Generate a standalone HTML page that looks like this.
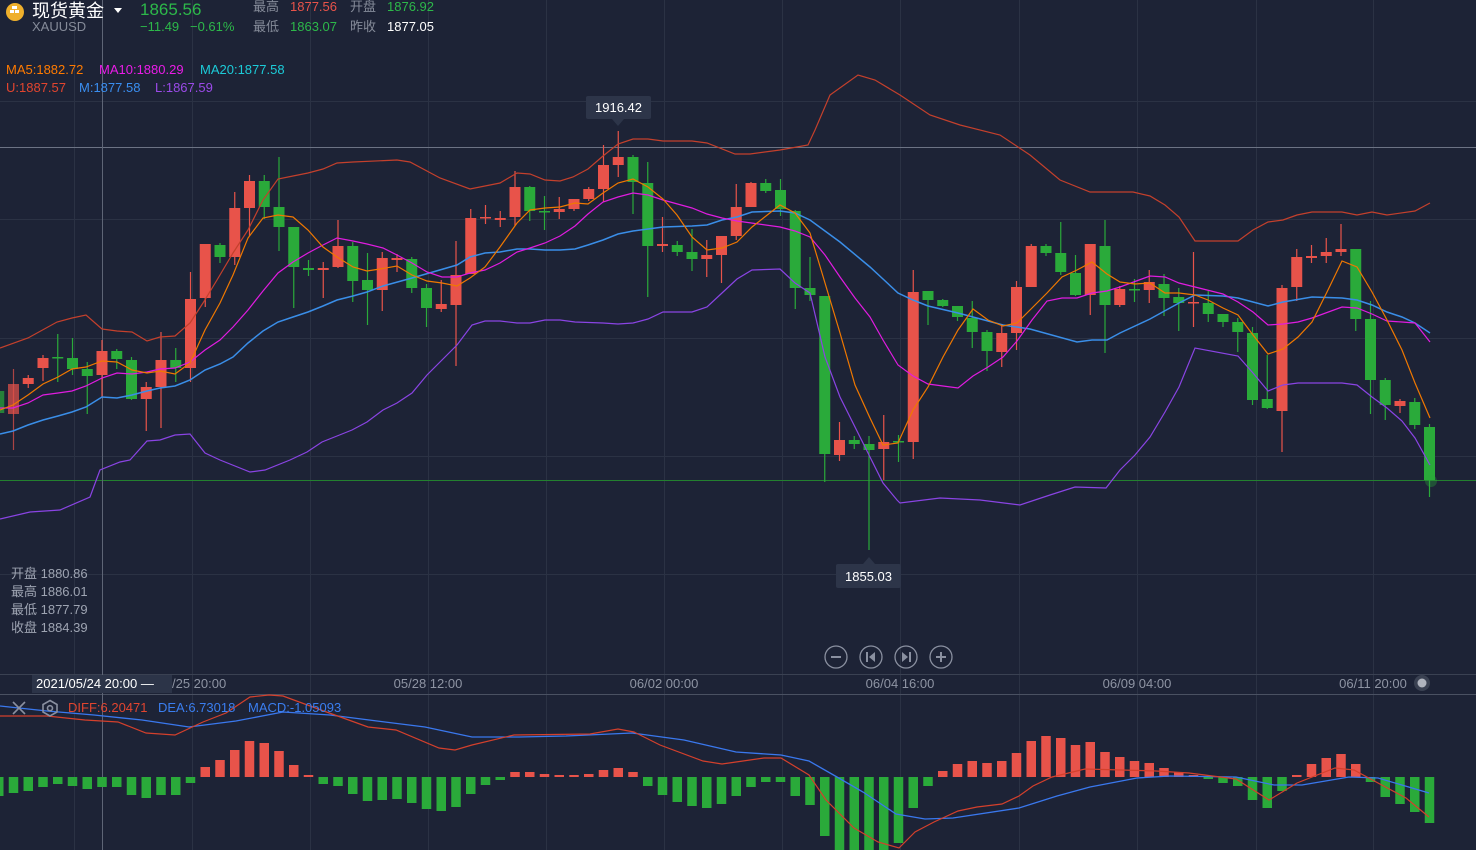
<!DOCTYPE html>
<html><head><meta charset="utf-8">
<style>
html,body{margin:0;padding:0;background:#1d2336;width:1476px;height:850px;overflow:hidden;font-family:"Liberation Sans","Noto Sans CJK SC",sans-serif}
.t{position:absolute;white-space:nowrap;font-size:13px;line-height:16px}
svg{position:absolute;left:0;top:0}
</style></head><body>
<svg id="s" width="1476" height="850" xmlns="http://www.w3.org/2000/svg">
<g stroke="#2b3244" stroke-width="1">
<line x1="0" y1="101.5" x2="1476" y2="101.5"/>
<line x1="0" y1="219.5" x2="1476" y2="219.5"/>
<line x1="0" y1="338.5" x2="1476" y2="338.5"/>
<line x1="0" y1="456.5" x2="1476" y2="456.5"/>
<line x1="0" y1="574.5" x2="1476" y2="574.5"/>
</g>
<g id="vg" stroke="#2b3244" stroke-width="1"></g>
<line x1="0" y1="147.5" x2="1476" y2="147.5" stroke="#6c7384"/>
<line x1="0" y1="480.5" x2="1476" y2="480.5" stroke="#23802f"/>
<line x1="0" y1="674.5" x2="1476" y2="674.5" stroke="#3a4152"/>
<line x1="0" y1="694.5" x2="1476" y2="694.5" stroke="#4a5162"/>
<line x1="102.5" y1="0" x2="102.5" y2="850" stroke="#5e6576"/>
<g id="cd"></g>
<g id="ln" fill="none" stroke-width="1.2"></g>
<!-- tags -->
<rect x="586" y="96" width="65" height="23" rx="2" fill="#2d3549"/>
<polygon points="612,119 624,119 618,126" fill="#2d3549"/>
<text x="618.5" y="112" fill="#fff" font-size="13" text-anchor="middle" font-family="Liberation Sans">1916.42</text>
<rect x="836" y="564" width="65" height="24" rx="2" fill="#2d3549"/>
<polygon points="863,564 875,564 869,557" fill="#2d3549"/>
<text x="868.5" y="581" fill="#fff" font-size="13" text-anchor="middle" font-family="Liberation Sans">1855.03</text>
<!-- buttons -->
<g fill="none" stroke="#8a90a0" stroke-width="1.3">
<circle cx="836" cy="657" r="11"/><circle cx="871" cy="657" r="11"/><circle cx="906" cy="657" r="11"/><circle cx="941" cy="657" r="11"/>
<line x1="831" y1="657" x2="841" y2="657" stroke-width="2"/>
<line x1="936" y1="657" x2="946" y2="657" stroke-width="2"/><line x1="941" y1="652" x2="941" y2="662" stroke-width="2"/>
<line x1="867" y1="652" x2="867" y2="662" stroke-width="2"/>
<line x1="910" y1="652" x2="910" y2="662" stroke-width="2"/>
</g>
<polygon points="875,652 875,662 869,657" fill="#8a90a0"/>
<polygon points="902,652 902,662 908,657" fill="#8a90a0"/>
<!-- time axis -->
<rect x="32" y="675" width="140" height="18" fill="#2c3448"/>
<g font-size="13" fill="#8e94a3" font-family="Liberation Sans">
<text x="36" y="688" fill="#fff">2021/05/24 20:00 —</text>
<text x="172" y="688">/25 20:00</text>
<text x="428" y="688" text-anchor="middle">05/28 12:00</text>
<text x="664" y="688" text-anchor="middle">06/02 00:00</text>
<text x="900" y="688" text-anchor="middle">06/04 16:00</text>
<text x="1137" y="688" text-anchor="middle">06/09 04:00</text>
<text x="1373" y="688" text-anchor="middle">06/11 20:00</text>
</g>
<circle cx="1422" cy="683" r="8" fill="#3a4152"/>
<circle cx="1422" cy="683" r="4.5" fill="#b0b4be"/>
<!-- macd icons -->
<g stroke="#8a90a0" stroke-width="1.6" fill="none">
<line x1="13" y1="702" x2="25" y2="714"/><line x1="25" y1="702" x2="13" y2="714"/>
<polygon points="50,700.5 57,704.5 57,712 50,716 43,712 43,704.5"/>
<circle cx="50" cy="708.2" r="2.5"/>
</g>
<circle cx="1431" cy="481" r="6" fill="#2aaa3a" opacity="0.35"/>
</svg>

<div class="t" style="left:6px;top:3px;width:18px;height:18px;border-radius:50%;background:#efb02c"></div>
<div class="t" style="left:10px;top:10px;width:4px;height:3px;background:#fff"></div>
<div class="t" style="left:15px;top:10px;width:4px;height:3px;background:#fff"></div>
<div class="t" style="left:12px;top:6px;width:5px;height:3px;background:#fff"></div>
<div class="t" style="left:32px;top:0px;font-size:18px;line-height:22px;color:#fff">现货黄金</div>
<div class="t" style="left:114px;top:8px;width:0;height:0;border-left:4px solid transparent;border-right:4px solid transparent;border-top:5px solid #fff"></div>
<div class="t" style="left:140px;top:0px;font-size:17px;line-height:20px;color:#2db84a">1865.56</div>
<div class="t" style="left:32px;top:19px;color:#858b99">XAUUSD</div>
<div class="t" style="left:140px;top:19px;color:#2db84a">−11.49&nbsp;&nbsp;&nbsp;−0.61%</div>
<div class="t" style="left:253px;top:-1px;color:#858b99">最高</div>
<div class="t" style="left:290px;top:-1px;color:#e8534a">1877.56</div>
<div class="t" style="left:350px;top:-1px;color:#858b99">开盘</div>
<div class="t" style="left:387px;top:-1px;color:#2db84a">1876.92</div>
<div class="t" style="left:253px;top:19px;color:#858b99">最低</div>
<div class="t" style="left:290px;top:19px;color:#2db84a">1863.07</div>
<div class="t" style="left:350px;top:19px;color:#858b99">昨收</div>
<div class="t" style="left:387px;top:19px;color:#fff">1877.05</div>

<div class="t" style="left:6px;top:62px;color:#ff7a00">MA5:1882.72</div>
<div class="t" style="left:99px;top:62px;color:#ea1ce8">MA10:1880.29</div>
<div class="t" style="left:200px;top:62px;color:#1ccbd8">MA20:1877.58</div>
<div class="t" style="left:6px;top:80px;color:#e2452f">U:1887.57</div>
<div class="t" style="left:79px;top:80px;color:#3a8ef0">M:1877.58</div>
<div class="t" style="left:155px;top:80px;color:#9a4ae8">L:1867.59</div>

<div class="t" style="left:11px;top:566px;color:#9ea4b2">开盘 1880.86</div>
<div class="t" style="left:11px;top:584px;color:#9ea4b2">最高 1886.01</div>
<div class="t" style="left:11px;top:602px;color:#9ea4b2">最低 1877.79</div>
<div class="t" style="left:11px;top:620px;color:#9ea4b2">收盘 1884.39</div>

<div class="t" style="left:68px;top:700px;color:#e2452f">DIFF:6.20471</div>
<div class="t" style="left:158px;top:700px;color:#3a7ef0">DEA:6.73018</div>
<div class="t" style="left:248px;top:700px;color:#3a7ef0">MACD:-1.05093</div>

<script>
var NS="http://www.w3.org/2000/svg";
function el(p,t,a){var e=document.createElementNS(NS,t);for(var k in a)e.setAttribute(k,a[k]);p.appendChild(e);return e;}
var vg=document.getElementById('vg');
[74,192,310,428,546,664,782,900,1019,1137,1256,1373].forEach(function(x){el(vg,'line',{x1:x+.5,y1:0,x2:x+.5,y2:850});});
var R="#e8534a",G="#2aaa3a";
// i, color, bodyTop, bodyBot, wickTop, wickBot
var C=[
[-1,'g',391,413,388,416],[0,'r',384,414,369,450],[1,'r',378,384,375,388],[2,'r',358,368,355,381],[3,'g',357,358,334,382],
[4,'g',358,369,338,375],[5,'g',369,376,362,414],[6,'r',351,375,340,397],[7,'g',351,359,349,369],[8,'g',360,399,357,400],
[9,'r',387,399,382,431],[10,'r',360,387,332,428],[11,'g',360,368,348,382],[12,'r',299,368,272,382],[13,'r',244,298,244,307],
[14,'g',245,257,243,263],[15,'r',208,257,192,265],[16,'r',181,208,175,236],[17,'g',181,207,175,219],[18,'g',207,227,157,251],
[19,'g',227,267,227,308],[20,'g',268,270,260,276],[21,'r',268,270,262,298],[22,'r',246,267,220,268],[23,'g',246,281,242,302],
[24,'g',280,290,253,325],[25,'r',258,290,252,311],[26,'r',258,260,254,272],[27,'g',259,288,257,293],[28,'g',288,308,284,327],
[29,'r',304,309,280,312],[30,'r',275,305,241,366],[31,'r',218,274,209,274],[32,'r',217,218.5,205,224],[33,'r',218,220,211,227],
[34,'r',187,217,171,226],[35,'g',187,211,186,221],[36,'g',211,212,196,230],[37,'r',209,212,197,219],[38,'r',199,209,199,211],
[39,'r',189,199,187,201],[40,'r',165,189,145,202],[41,'r',157,165,131,177],[42,'g',157,182,155,214],[43,'g',183,246,162,297],
[44,'r',244,246,217,252],[45,'g',245,252,241,256],[46,'g',252,259,229,271],[47,'r',255,259,240,277],[48,'r',236,255,236,283],
[49,'r',207,236,184,240],[50,'r',183,207,182,207],[51,'g',183,191,179,193],[52,'g',190,209,179,216],[53,'g',211,288,210,309],
[54,'g',288,295,257,301],[55,'g',296,454,296,482],[56,'r',440,455,422,461],[57,'g',440,444,436,449],[58,'g',444,450,436,550],
[59,'r',442,449,415,480],[60,'g',441,442,435,462],[61,'r',292,442,270,459],[62,'g',291,300,291,325],[63,'g',300,306,299,307],
[64,'g',306,317,306,321],[65,'g',318,332,301,348],[66,'g',332,351,330,371],[67,'r',333,352,325,367],[68,'r',287,333,281,350],
[69,'r',246,287,244,287],[70,'g',246,253,244,256],[71,'g',253,272,222,275],[72,'g',273,295,255,296],[73,'r',244,295,244,315],
[74,'g',246,305,220,353],[75,'r',289,305,286,307],[76,'g',289,290,279,302],[77,'r',282,290,270,303],[78,'g',284,298,274,316],
[79,'g',297,303,288,331],[80,'r',302,303,252,327],[81,'g',303,314,291,322],[82,'g',314,322,314,327],[83,'g',322,332,318,352],
[84,'g',333,400,327,405],[85,'g',399,408,355,409],[86,'r',288,411,285,452],[87,'r',257,287,249,301],[88,'r',256,258,245,263],
[89,'r',252,256,238,263],[90,'r',249,252,224,256],[91,'g',249,319,249,331],[92,'g',319,380,301,414],[93,'g',380,405,378,420],
[94,'r',401,406,399,413],[95,'g',402,425,398,429],[96,'g',427,480,424,497]];
var cd=document.getElementById('cd');
function cx(i){return 13.5+14.75*i;}
C.forEach(function(c){var x=cx(c[0]),col=c[1]=='r'?R:G;var op=c[0]<=0?0.7:1;
el(cd,'line',{x1:x,y1:c[4],x2:x,y2:c[5],stroke:col,'stroke-width':1.2,opacity:op});
el(cd,'rect',{x:x-5.5,y:c[2],width:11,height:Math.max(1.5,c[3]-c[2]),fill:col,opacity:op});});
// MACD histogram
var H=[796,793,791,787,784,786,789,787,787,795,798,795,795,783,767,760,750,741,743,751,765,775,784,786,794,801,800,799,803,809,811,807,794,785,780,772,772,774,775,775,774,770,768,772,786,795,802,806,808,804,796,787,782,782,796,805,836,850,850,850,850,843,808,786,771,764,761,763,761,753,741,736,738,745,742,752,757,761,763,768,772,775,779,783,786,800,808,791,775,764,758,754,764,782,797,804,812,823];
H.forEach(function(y,k){var i=k-1,x=cx(i);var up=y<777;el(cd,'rect',{x:x-4.75,y:up?y:777,width:9.5,height:Math.max(2,Math.abs(y-777)),fill:up?R:G});});
function pl(pts,col,w){el(document.getElementById('ln'),'polyline',{points:pts,stroke:col,'stroke-width':w||1.2});}
pl("0,348 28,338 57,322 72,318 86,315 102,329 117,331 132,332 147,341 160,337 175,336 190,323 203,303 217,280 233,253 248,230 263,200 278,179 293,176 308,173 323,169 337,163 353,162 397,160 410,162 440,178 470,189 500,183 517,173 530,174 545,180 560,181 573,177 588,169 603,156 618,144 633,139 648,139 663,141 692,141 707,143 735,154 750,154 780,150 808,145 815,130 830,95 858,75 875,80 900,95 930,115 960,125 1000,135 1030,155 1060,180 1090,192 1133,192 1150,196 1165,205 1179,217 1195,241 1238,241 1253,230 1268,222 1283,220 1297,215 1312,212 1342,212 1357,215 1372,212 1387,215 1415,211 1430,203","#c4402c");
pl("0,519 30,512 60,510 90,497 100,470 120,462 130,460 147,441 160,440 175,435 190,434 205,453 220,460 250,472 265,470 290,460 307,452 322,442 337,436 352,430 367,422 383,410 397,403 412,393 427,375 442,360 457,345 472,325 485,321 500,321 517,323 530,323 545,320 560,320 575,322 603,323 618,324 633,323 648,319 663,312 692,312 707,307 722,293 737,279 752,270 780,269 795,283 810,293 825,357 840,397 855,427 870,457 883,483 897,500 900,503 940,498 980,500 1020,505 1050,495 1075,487 1106,488 1120,470 1135,455 1150,437 1165,412 1179,387 1195,348 1238,356 1253,373 1268,391 1283,385 1298,383 1342,383 1357,385 1372,397 1387,408 1402,421 1415,438 1430,465","#8a44e4");
pl("0,434 13,431 28,425 43,420 58,416 72,412 86,407 102,397 117,398 132,395 147,391 160,388 175,386 190,380 205,370 220,364 233,357 248,343 263,331 278,322 293,317 308,312 323,306 337,300 353,296 367,292 383,286 412,278 457,265 470,257 485,253 500,252 517,249 530,249 545,250 560,250 575,249 588,245 603,240 618,234 633,231 648,229 663,227 692,226 707,225 722,220 737,217 752,212 780,211 795,213 810,220 840,242 870,267 883,279 898,293 913,300 928,306 958,313 973,317 1003,325 1030,329 1077,342 1092,340 1107,340 1120,333 1150,319 1179,303 1195,295 1223,296 1238,298 1253,302 1268,306 1283,302 1312,297 1342,298 1357,300 1372,305 1387,312 1402,317 1415,323 1430,333","#3a8ee8",1.5);
pl("0,408 13,408 28,403 43,395 58,393 72,391 86,386 102,378 117,373 132,374 147,372 160,369 175,368 190,362 205,350 220,340 233,327 248,310 263,291 278,273 293,262 308,253 323,245 337,238 353,241 367,244 383,248 397,255 412,263 427,272 442,277 457,277 470,273 485,270 500,263 517,252 530,248 545,243 560,236 575,226 588,214 603,202 618,197 633,193 648,195 663,200 692,208 707,214 722,218 737,221 780,227 795,231 810,237 825,255 840,277 855,298 870,317 883,340 898,365 913,376 928,384 943,386 958,388 973,376 988,367 1003,357 1017,341 1032,320 1047,301 1062,298 1077,298 1092,293 1107,291 1120,287 1150,276 1165,277 1179,283 1223,294 1238,302 1253,312 1268,325 1283,324 1298,322 1312,318 1342,307 1357,308 1372,314 1387,321 1402,322 1415,323 1430,342","#e01ce0");
pl("0,410 13,405 28,395 43,384 58,377 72,369 86,367 102,361 117,362 132,370 147,373 160,371 175,374 190,363 205,330 220,303 233,275 248,238 263,218 278,215 293,217 308,230 323,247 337,257 353,267 367,271 380,269 397,266 412,275 427,281 442,283 457,286 470,278 485,267 500,247 517,223 530,210 545,208 560,207 575,203 588,204 603,193 618,183 633,179 648,187 663,199 677,215 692,237 707,250 722,248 737,242 752,227 780,205 795,213 810,233 825,283 840,333 855,385 870,418 883,445 898,443 913,410 928,387 943,357 958,330 973,309 988,320 1003,326 1017,323 1032,308 1047,293 1062,277 1077,270 1092,262 1107,274 1120,282 1135,284 1150,283 1165,293 1179,293 1195,295 1208,300 1223,308 1238,315 1253,335 1268,354 1283,349 1298,337 1312,322 1327,292 1342,261 1357,267 1372,292 1387,320 1402,350 1415,383 1430,418","#f07800");
pl("0,706 47,711 94,715 142,720 189,727 236,721 283,712 330,715 377,721 425,727 472,737 519,737 566,736 632,733 684,740 736,752 781,755 809,761 837,777 863,792 896,814 925,819 953,818 1019,808 1057,796 1090,787 1137,778 1170,776 1236,777 1274,785 1302,785 1349,777 1378,778 1429,793","#3a78ee",1.3);
pl("0,716 47,716 85,720 118,722 146,733 175,735 203,722 226,713 250,697 269,695 283,696 321,710 368,727 396,730 439,748 455,750 472,745 514,735 590,734 618,729 634,732 660,745 703,761 722,764 736,762 764,758 781,758 809,775 826,800 854,828 878,842 899,848 915,832 934,822 958,811 977,807 1002,804 1019,796 1033,786 1052,777 1085,769 1156,771 1189,773 1236,779 1269,800 1297,783 1335,768 1354,770 1378,783 1406,798 1429,817","#d4402c",1.2);
</script>
</body></html>
